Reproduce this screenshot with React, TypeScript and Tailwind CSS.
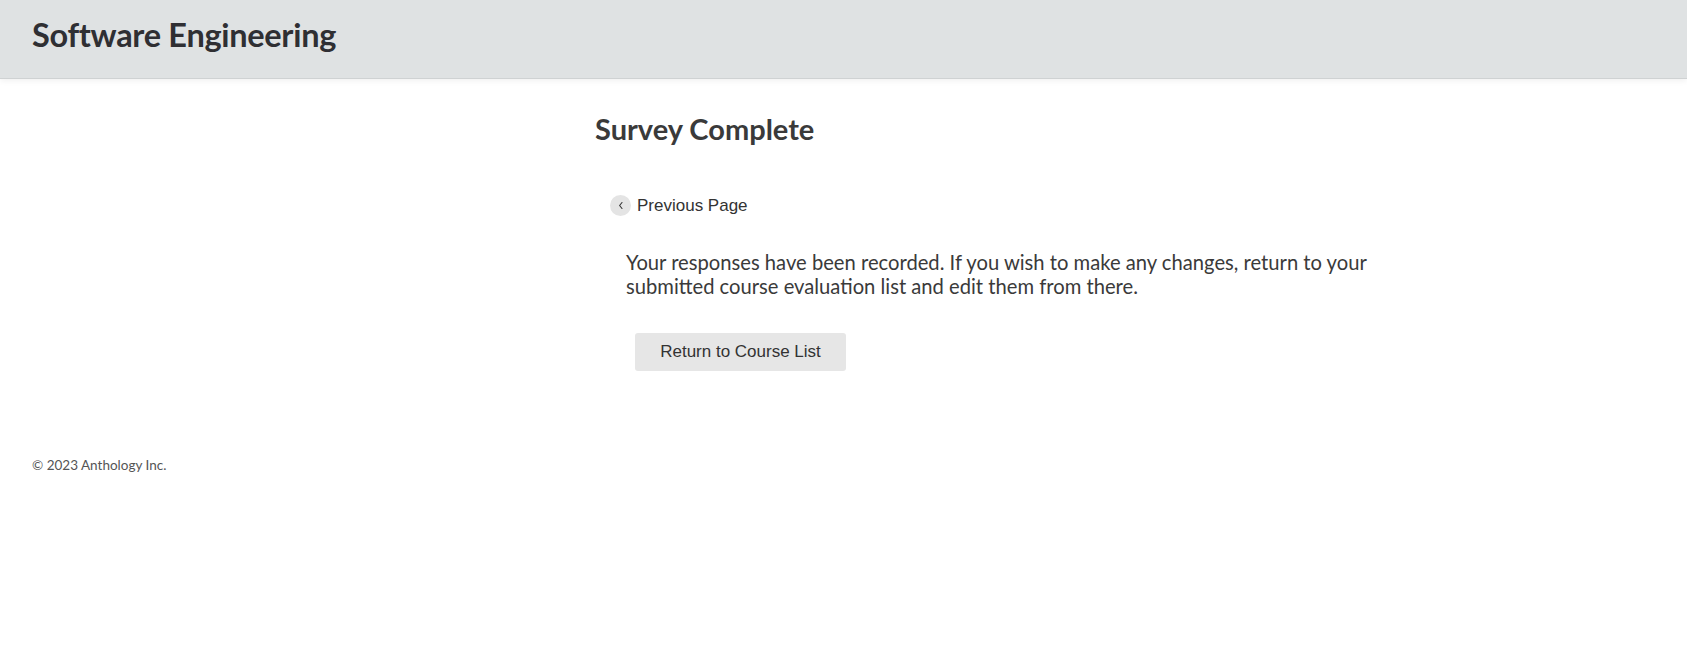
export default function App() {
  return (
    <div className="min-h-screen bg-white text-[#333] font-['Lato','Noto_Sans',sans-serif]">
      {/* Header */}
      <header className="h-[79px] bg-[#dfe2e3] border-b border-[#cfd2d3] shadow-[0_2px_6px_rgba(0,0,0,0.06)] flex items-center pl-8 pb-[7px]">
        <h1 className="text-[32.5px] font-bold text-[#2f2f33] tracking-[-0.3px]">Software Engineering</h1>
      </header>

      {/* Main */}
      <main className="pl-[595px] pt-[33px]">
        <h2 className="text-[29px] font-bold text-[#3a3a3a] leading-[34px]">Survey Complete</h2>

        <a href="#" className="mt-[47px] ml-[15px] inline-flex items-center gap-[6px] font-['Liberation_Sans',Arial,sans-serif] text-[17px] text-[#333]">
          <span className="w-[21px] h-[21px] rounded-full bg-[#e4e4e4] flex items-center justify-center">
            <svg width="8" height="9" viewBox="0 0 8 9" fill="none">
              <path d="M5 1.5 2.6 4.5 5 7.5" stroke="#333" strokeWidth="1.1" strokeLinecap="round" strokeLinejoin="round" />
            </svg>
          </span>
          Previous Page
        </a>

        <p className="mt-[31px] ml-[31px] w-[780px] text-[20.2px] leading-[24px] text-[#3a3a3a]">
          Your responses have been recorded. If you wish to make any changes, return to your submitted course evaluation list and edit them from there.
        </p>

        <button className="mt-[35px] ml-[40px] h-[38px] w-[211px] rounded-[3px] bg-[#e6e6e6] font-['Liberation_Sans',Arial,sans-serif] text-[17px] text-[#333]">
          Return to Course List
        </button>
      </main>

      {/* Footer */}
      <footer className="pl-8 pt-[84px] text-[13.5px] text-[#555]">© 2023 Anthology Inc.</footer>
    </div>
  )
}
